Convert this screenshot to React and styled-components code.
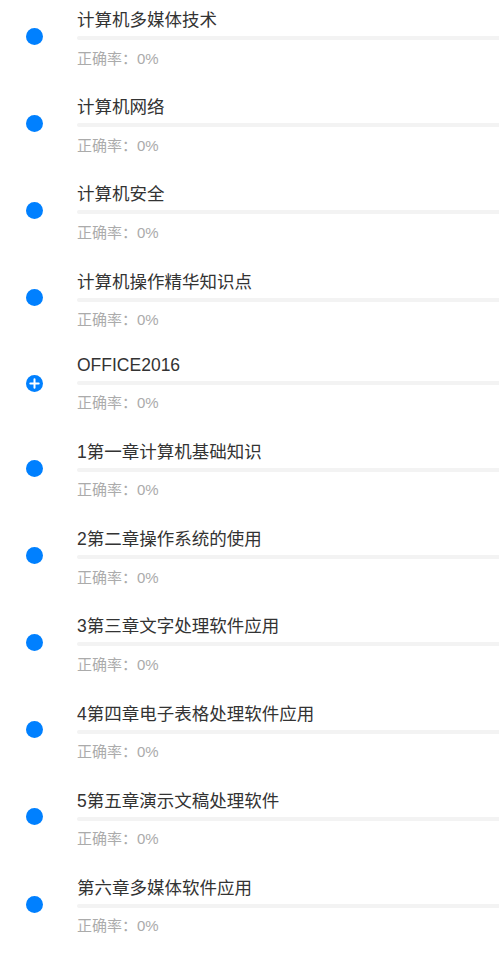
import React from "react";
import styled, { createGlobalStyle } from "styled-components";

const Global = createGlobalStyle`
  html, body { margin: 0; padding: 0; background: #ffffff; }
  body { font-family: "Liberation Sans", "Noto Sans CJK SC", sans-serif; }
`;

const List = styled.ul`
  list-style: none;
  margin: 0;
  padding: 0;
  width: 499px;
  overflow: hidden;
`;

const Row = styled.li`
  display: flex;
  align-items: center;
  padding: 6px 0 19.7px;
`;

const Marker = styled.div`
  width: 77px;
  flex: none;
  display: flex;
  justify-content: center;
  padding-right: 8px;
  padding-bottom: 1px;
  box-sizing: border-box;
`;

const Dot = styled.span`
  display: block;
  width: 17px;
  height: 17px;
  border-radius: 50%;
  background: #0080ff;
`;

const Body = styled.div`
  flex: 1;
  min-width: 0;
  display: flex;
  flex-direction: column;
`;

const Title = styled.div`
  font-size: 17.5px;
  min-height: 21px;
  color: #333333;
  white-space: nowrap;
`;

const Track = styled.div`
  height: 4px;
  margin: 5px 0 6.5px;
  background: #f3f3f3;
  border-radius: 2px 0 0 2px;
`;

const Rate = styled.div`
  font-size: 15px;
  color: #ababab;
`;

const PlusIcon = () => (
  <svg width="17" height="17" viewBox="0 0 17 17">
    <circle cx="8.5" cy="8.5" r="8.5" fill="#0080ff" />
    <path d="M8.5 4.3v8.4M4.3 8.5h8.4" stroke="#ffffff" strokeWidth="2" strokeLinecap="round" />
  </svg>
);

const items = [
  { title: "计算机多媒体技术" },
  { title: "计算机网络" },
  { title: "计算机安全" },
  { title: "计算机操作精华知识点" },
  { title: "OFFICE2016", plus: true },
  { title: "1第一章计算机基础知识" },
  { title: "2第二章操作系统的使用" },
  { title: "3第三章文字处理软件应用" },
  { title: "4第四章电子表格处理软件应用" },
  { title: "5第五章演示文稿处理软件" },
  { title: "第六章多媒体软件应用" },
];

export default function App() {
  return (
    <>
      <Global />
      <List>
        {items.map((it) => (
          <Row key={it.title}>
            <Marker>{it.plus ? <PlusIcon /> : <Dot />}</Marker>
            <Body>
              <Title>{it.title}</Title>
              <Track />
              <Rate>正确率：0%</Rate>
            </Body>
          </Row>
        ))}
      </List>
    </>
  );
}
